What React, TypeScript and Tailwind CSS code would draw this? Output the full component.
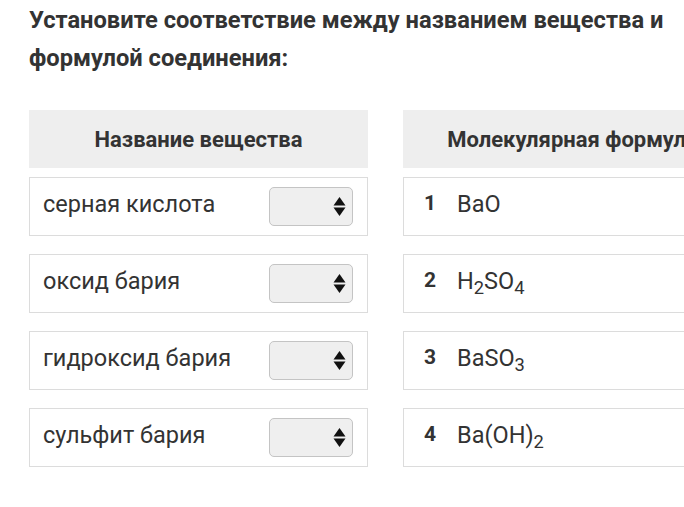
import React from "react";

const names = ["серная кислота", "оксид бария", "гидроксид бария", "сульфит бария"];

const Sub = ({ children }: { children: React.ReactNode }) => (
  <span className="text-[0.78em] relative top-[5px]">{children}</span>
);

const formulas: React.ReactNode[] = [
  <>BaO</>,
  <>
    H<Sub>2</Sub>SO<Sub>4</Sub>
  </>,
  <>
    BaSO<Sub>3</Sub>
  </>,
  <>
    Ba(OH)<Sub>2</Sub>
  </>,
];

function SelectBox() {
  return (
    <div className="w-[84px] h-[39px] rounded-[5px] border border-[#c4c4c4] bg-[#efefef] flex items-center justify-end pr-[6px]">
      <svg width="13" height="21" viewBox="0 0 13 21">
        <path d="M6.5 1 L12.5 9.5 H0.5 Z" fill="#111" />
        <path d="M6.5 20 L12.5 11.5 H0.5 Z" fill="#111" />
      </svg>
    </div>
  );
}

export default function App() {
  return (
    <div
      className="w-[684px] h-[507px] overflow-hidden bg-white text-[#333]"
      style={{ fontFamily: "Roboto, 'Noto Sans', sans-serif" }}
    >
      <div className="pl-[29px] pt-[1px]">
        <h1 className="text-[23.7px] font-bold leading-[38px] text-[#333] w-[650px]">
          Установите соответствие между названием вещества и формулой соединения:
        </h1>
        <div className="mt-[33px] flex gap-[35px] w-[720px]">
          <div className="w-[339px] shrink-0 flex flex-col">
            <div className="h-[58px] bg-[#eeeeee] flex items-center justify-center text-[22px] font-bold">
              Название вещества
            </div>
            <div className="mt-[9px] flex flex-col gap-[18px]">
              {names.map((n) => (
                <div
                  key={n}
                  className="h-[59px] border border-[#dcdcdc] flex items-center justify-between pl-[13px] pr-[14px]"
                >
                  <span className="text-[23.5px] -mt-[3px]">{n}</span>
                  <SelectBox />
                </div>
              ))}
            </div>
          </div>
          <div className="w-[339px] shrink-0 flex flex-col">
            <div className="h-[58px] bg-[#eeeeee] flex items-center justify-center text-[22px] font-bold whitespace-nowrap">
              Молекулярная формула
            </div>
            <div className="mt-[9px] flex flex-col gap-[18px]">
              {formulas.map((f, i) => (
                <div
                  key={i}
                  className="h-[59px] border border-[#dcdcdc] flex items-center pl-[20px]"
                >
                  <span className="w-[33px] text-[21px] font-bold -mt-[5px]">{i + 1}</span>
                  <span className="text-[23.5px] leading-none -mt-[3px]">{f}</span>
                </div>
              ))}
            </div>
          </div>
        </div>
      </div>
    </div>
  );
}
